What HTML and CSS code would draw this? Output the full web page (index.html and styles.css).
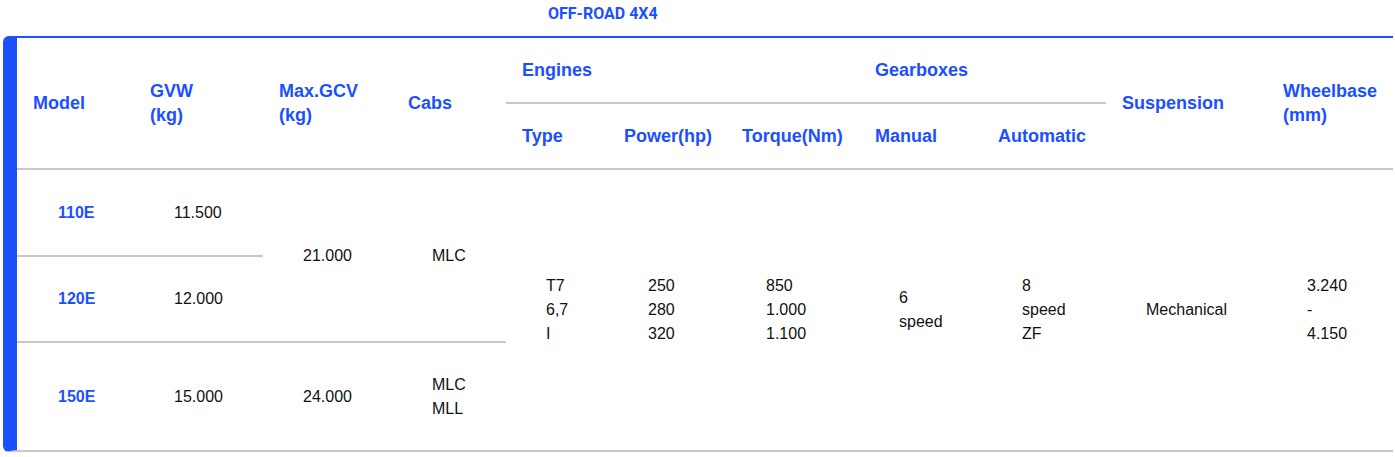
FILE: index.html
```html
<!DOCTYPE html>
<html lang="en">
<head>
<meta charset="utf-8">
<title>Off-road 4x4</title>
<link rel="stylesheet" href="styles.css">
</head>
<body>
<div class="title">OFF-ROAD 4X4</div>
<div class="spec">
  <div class="grid">
    <div class="th c1 rh">Model</div>
    <div class="th c2 rh">GVW<br>(kg)</div>
    <div class="th c3 rh">Max.GCV<br>(kg)</div>
    <div class="th c4 rh">Cabs</div>
    <div class="th engines bb">Engines</div>
    <div class="th gearboxes bb">Gearboxes</div>
    <div class="th c10 rh">Suspension</div>
    <div class="th c11 rh">Wheelbase<br>(mm)</div>

    <div class="th sub c5 bb">Type</div>
    <div class="th sub c6 bb">Power(hp)</div>
    <div class="th sub c7 bb">Torque(Nm)</div>
    <div class="th sub c8 bb">Manual</div>
    <div class="th sub c9 bb">Automatic</div>

    <div class="td model c1 r1 bb">110E</div>
    <div class="td c2 r1 bb">11.500</div>
    <div class="td model c1 r2 bb">120E</div>
    <div class="td c2 r2 bb">12.000</div>
    <div class="td c3 r12 bb">21.000</div>
    <div class="td c4 r12 bb">MLC</div>

    <div class="td c5 rall">T7<br>6,7<br>I</div>
    <div class="td c6 rall">250<br>280<br>320</div>
    <div class="td c7 rall">850<br>1.000<br>1.100</div>
    <div class="td c8 rall">6<br>speed</div>
    <div class="td c9 rall">8<br>speed<br>ZF</div>
    <div class="td c10 rall">Mechanical</div>
    <div class="td c11 rall">3.240<br>-<br>4.150</div>

    <div class="td model c1 r3">150E</div>
    <div class="td c2 r3">15.000</div>
    <div class="td c3 r3">24.000</div>
    <div class="td c4 r3">MLC<br>MLL</div>
  </div>
</div>
</body>
</html>
```

FILE: styles.css
```css
html, body {
  margin: 0;
  padding: 0;
  background: #ffffff;
}

body {
  font-family: "Liberation Sans", Arial, sans-serif;
  color: #111111;
}

.title {
  height: 36px;
  line-height: 28px;
  padding-left: 548px;
  font-family: Roboto, "Liberation Sans", sans-serif;
  font-weight: 700;
  font-size: 16px;
  color: #1b50ff;
  box-sizing: border-box;
}

.spec {
  margin: 0 2px 0 3px;
  border-left: 14px solid #1b50ff;
  border-top: 2px solid #1b50ff;
  border-bottom: 2px solid #c8c8c8;
  border-radius: 6px 0 0 6px;
}

.grid {
  display: grid;
  grid-template-columns: 117px 129px 129px 114px 102px 118px 133px 123px 124px 161px 126px;
  grid-template-rows: 66px 66px 87px 86px 107px;
}

.th, .td {
  display: flex;
  align-items: center;
  box-sizing: border-box;
  line-height: 24px;
}

.th {
  padding-left: 16px;
  font-weight: 700;
  font-size: 18px;
  color: #1b50ff;
}

.td {
  padding-left: 40px;
  font-size: 16px;
  color: #111111;
}

.td.model {
  font-weight: 700;
  color: #1b50ff;
  padding-left: 41px;
}

.bb, .rh {
  border-bottom: 2px solid #c8c8c8;
}

.rh { grid-row: 1 / 3; }
.sub { grid-row: 2; }
.engines { grid-column: 5 / 8; grid-row: 1; }
.gearboxes { grid-column: 8 / 10; grid-row: 1; }

.c1 { grid-column: 1; }
.c2 { grid-column: 2; }
.c3 { grid-column: 3; }
.c4 { grid-column: 4; }
.c5 { grid-column: 5; }
.c6 { grid-column: 6; }
.c7 { grid-column: 7; }
.c8 { grid-column: 8; }
.c9 { grid-column: 9; }
.c10 { grid-column: 10; }
.c11 { grid-column: 11; }

.r1 { grid-row: 3; }
.r2 { grid-row: 4; }
.r3 { grid-row: 5; }
.r12 { grid-row: 3 / 5; }
.rall { grid-row: 3 / 6; }
```
